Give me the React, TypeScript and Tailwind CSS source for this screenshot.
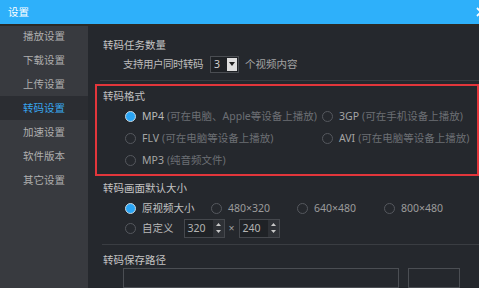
import React from "react";

const MENU = ["播放设置", "下载设置", "上传设置", "转码设置", "加速设置", "软件版本", "其它设置"];

const Radio = ({ on }: { on?: boolean }) =>
  on ? (
    <span className="flex h-[11px] w-[11px] shrink-0 items-center justify-center rounded-full border border-[#c9d6df] bg-[#2ea8f6]">
      <span className="h-[7px] w-[7px] rounded-full bg-[#2aa4f4]" />
    </span>
  ) : (
    <span className="h-[11px] w-[11px] shrink-0 rounded-full border border-[#55585e]" />
  );

const Option = ({
  on,
  label,
  desc,
  labelClass = "text-[#a4a4a4]",
}: {
  on?: boolean;
  label: string;
  desc?: string;
  labelClass?: string;
}) => (
  <div className="flex items-center gap-[6px] whitespace-nowrap">
    <Radio on={on} />
    <span className={labelClass}>{label}</span>
    {desc && <span className="-ml-[3px] text-[#6c6f74]">{desc}</span>}
  </div>
);

const Spin = ({ value }: { value: string }) => (
  <div className="flex h-[19px] w-[41px] items-center border border-[#45484d] bg-[#1f2226]">
    <span className="flex-1 pl-[3px] text-[#b4b4b4]">{value}</span>
    <span className="flex h-full w-[11px] flex-col items-center justify-center gap-[4px] bg-[#2e3136]">
      <svg width="5" height="3" viewBox="0 0 5 3">
        <path d="M0 3L2.5 0L5 3z" fill="#c8c8c8" />
      </svg>
      <svg width="5" height="3" viewBox="0 0 5 3">
        <path d="M0 0h5L2.5 3z" fill="#c8c8c8" />
      </svg>
    </span>
  </div>
);

export default function App() {
  return (
    <div className="flex h-[288px] w-[479px] flex-col overflow-hidden bg-[#25282d] font-['Noto_Sans','Noto_Sans_CJK_SC',sans-serif] text-[10.5px] leading-none">
      {/* title bar */}
      <div className="flex h-6 shrink-0 items-center justify-between overflow-hidden bg-[#2eb0fa] pl-2">
        <span className="text-white">设置</span>
        <svg width="10" height="10" viewBox="0 0 10 10" className="-mr-[7px]">
          <path d="M1 1L9 9M9 1L1 9" stroke="#fff" strokeWidth="1.8" />
        </svg>
      </div>
      <div className="h-[2px] shrink-0 bg-[#2b2925]" />

      <div className="flex min-h-0 flex-1">
        {/* sidebar */}
        <div className="w-[88px] shrink-0 bg-[#383a3f]">
          <div className="-mt-[2px] flex flex-col">
            {MENU.map((m) => (
              <div
                key={m}
                className={
                  m === "转码设置"
                    ? "flex h-6 items-center justify-center bg-[#2b2d32] text-[#38a7ef]"
                    : "flex h-6 items-center justify-center text-[#aeaeae]"
                }
              >
                {m}
              </div>
            ))}
          </div>
        </div>

        {/* content */}
        <div className="flex min-w-0 flex-1 flex-col pt-[10px]">
          <div className="flex h-[20px] items-center pl-[15px] text-[#c4c4c4]">转码任务数量</div>
          <div className="flex h-[24px] items-center pl-[35px] text-[#bcbcbc]">
            <span className="tracking-[-0.5px]">支持用户同时转码</span>
            <div className="ml-[7px] flex h-[17px] w-[29px] items-center border border-[#4a4d52] bg-[#1f2226]">
              <span className="flex-1 pl-[3px] text-[#d0d0d0]">3</span>
              <span className="mr-[1px] flex h-[13px] w-[10px] items-center justify-center bg-[#dedede]">
                <svg width="6" height="4" viewBox="0 0 6 4">
                  <path d="M0 0h6L3 4z" fill="#1e1e1e" />
                </svg>
              </span>
            </div>
            <span className="ml-[6px] text-[#a2a2a2]">个视频内容</span>
          </div>
          <div className="mt-[5px] ml-3 h-px bg-[#3a3d42]" />

          {/* format box */}
          <div className="mt-[4px] ml-[7px] w-[384px] border-2 border-[#e2363b] pb-[3px] pl-[6px]">
            <div className="flex h-[19px] items-center text-[#c0c0c0]">转码格式</div>
            <div className="grid h-[22px] grid-cols-[197px_auto] items-center pl-[22px]">
              <Option on label="MP4" desc=" (可在电脑、Apple等设备上播放)" labelClass="text-[#b8b8b8]" />
              <Option label="3GP" desc=" (可在手机设备上播放)" />
            </div>
            <div className="grid h-[22px] grid-cols-[197px_auto] items-center pl-[22px]">
              <Option label="FLV" desc="  (可在电脑等设备上播放)" />
              <Option label="AVI" desc="  (可在电脑等设备上播放)" />
            </div>
            <div className="flex h-[22px] items-center pl-[22px]">
              <Option label="MP3" desc=" (纯音频文件)" />
            </div>
          </div>

          <div className="mt-[2px] flex h-[22px] items-center pl-[15px] text-[#c4c4c4]">转码画面默认大小</div>
          <div className="grid h-[24px] grid-cols-[86px_86px_87px_auto] items-center pl-[37px]">
            <Option on label="原视频大小" labelClass="text-[#c0c0c0]" />
            <Option label="480×320" labelClass="text-[#9c9c9c]" />
            <Option label="640×480" labelClass="text-[#9c9c9c]" />
            <Option label="800×480" labelClass="text-[#9c9c9c]" />
          </div>
          <div className="flex h-[22px] items-center pl-[37px]">
            <Option label="自定义" labelClass="text-[#b8b8b8]" />
            <div className="ml-[10px] flex items-center">
              <Spin value="320" />
              <span className="w-[14px] text-center text-[#9c9c9c]">×</span>
              <Spin value="240" />
            </div>
          </div>
          <div className="mt-[6px] ml-[14px] h-px bg-[#3a3d42]" />

          <div className="mt-[8px] flex h-[16px] items-center pl-[15px] text-[#c4c4c4]">转码保存路径</div>
          <div className="mt-[1px] flex gap-[9px] pl-[35px]">
            <div className="h-[20px] w-[276px] border border-[#4b4e53]" />
            <div className="h-[20px] w-[52px] border border-[#4b4e53]" />
          </div>
        </div>
      </div>
    </div>
  );
}
